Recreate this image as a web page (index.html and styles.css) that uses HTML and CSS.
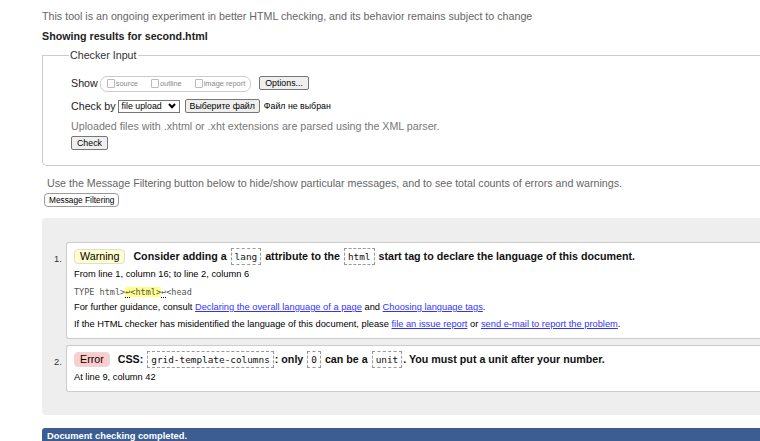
FILE: index.html
```html
<!DOCTYPE html>
<html lang="en">
<head>
<meta charset="utf-8">
<title>Showing results for second.html - Nu Html Checker</title>
<link rel="stylesheet" href="styles.css">
</head>
<body>
<div class="page">
  <p class="notice">This tool is an ongoing experiment in better HTML checking, and its behavior remains subject to change</p>
  <p class="showing">Showing results for second.html</p>

  <fieldset class="checker">
    <legend>Checker Input</legend>
    <div class="row show-row">
      <span class="label">Show</span>
      <span class="opts">
        <span class="opt"><span class="cb"></span>source</span>
        <span class="opt"><span class="cb"></span>outline</span>
        <span class="opt"><span class="cb"></span>image report</span>
      </span>
      <button class="btn options-btn" type="button">Options...</button>
    </div>
    <div class="row check-row">
      <span class="label">Check by</span>
      <span class="select">file upload<svg class="chev" width="8" height="6" viewBox="0 0 8 6"><path d="M1 1 L4 4.2 L7 1" fill="none" stroke="#000" stroke-width="2"/></svg></span>
      <button class="btn file-btn" type="button">Выберите файл</button>
      <span class="nofile">Файл не выбран</span>
    </div>
    <p class="hint">Uploaded files with .xhtml or .xht extensions are parsed using the XML parser.</p>
    <button class="btn check-btn" type="button">Check</button>
  </fieldset>

  <p class="filter-note">Use the Message Filtering button below to hide/show particular messages, and to see total counts of errors and warnings.</p>
  <button class="btn filter-btn" type="button">Message Filtering</button>

  <div class="results">
    <ol class="messages">
      <li class="msg warning">
        <p class="msg-title"><span class="badge">Warning</span><span class="text">Consider adding a <code>lang</code> attribute to the <code>html</code> start tag to declare the language of this document.</span></p>
        <p class="loc">From line 1, column 16; to line 2, column 6</p>
        <p class="extract"><code>TYPE html&gt;<span class="hl"><span class="lf">↩</span>&lt;html&gt;</span><span class="lf">↩</span>&lt;head</code></p>
        <p class="small">For further guidance, consult <a href="#">Declaring the overall language of a page</a> and <a href="#">Choosing language tags</a>.</p>
        <p class="small">If the HTML checker has misidentified the language of this document, please <a href="#">file an issue report</a> or <a href="#">send e-mail to report the problem</a>.</p>
      </li>
      <li class="msg error">
        <p class="msg-title"><span class="badge">Error</span><span class="text">CSS: <code>grid-template-columns</code>: only <code>0</code> can be a <code>unit</code>. You must put a unit after your number.</span></p>
        <p class="loc">At line 9, column 42</p>
      </li>
    </ol>
  </div>

  <p class="done">Document checking completed.</p>
</div>
</body>
</html>
```

FILE: styles.css
```css
html, body {
  margin: 0;
  padding: 0;
  overflow: hidden;
  background: #fff;
}

body {
  font-family: "Liberation Sans", Arial, sans-serif;
  color: #000;
}

.page {
  width: 900px;
  padding-left: 42px;
  padding-top: 9px;
}

p {
  margin: 0;
}

.notice {
  font-size: 10.7px;
  line-height: 14px;
  color: #666;
}

.showing {
  margin-top: 6px;
  font-size: 10.7px;
  line-height: 14px;
  font-weight: bold;
  color: #222;
}

.checker {
  margin: 6px 0 0 0;
  padding: 14px 28px 15px 28px;
  border: 1px solid #ccc;
  border-radius: 0 0 0 5px;
  border-right: none;
}

.checker legend {
  font-size: 10.7px;
  color: #333;
  padding: 0 1px;
  margin-left: -2px;
}

.row {
  display: flex;
  align-items: center;
  font-size: 10.7px;
  color: #222;
}

.label {
  margin-right: 2px;
}

.show-row {
  height: 16px;
}

.opts {
  display: inline-flex;
  align-items: center;
  height: 14px;
  border: 1px solid #ccc;
  border-radius: 7px;
  padding: 0 5px 0 6px;
  margin-right: 8px;
  margin-top: 1px;
}

.opt {
  display: inline-flex;
  align-items: center;
  font-size: 7.4px;
  color: #888;
  margin-right: 13px;
}

.opt:last-child {
  margin-right: 0;
}

.cb {
  display: inline-block;
  width: 6px;
  height: 7px;
  border: 1px solid #bbb;
  border-radius: 1px;
  margin-right: 1px;
}

.btn {
  font-family: "Liberation Sans", Arial, sans-serif;
  font-size: 8.8px;
  color: #000;
  background: #efefef;
  border: 1px solid #767676;
  border-radius: 2px;
  padding: 0 5px;
  height: 14px;
  line-height: 12px;
  margin: 0;
}

.check-row {
  margin-top: 7px;
  height: 16px;
}

.select {
  display: inline-flex;
  align-items: center;
  justify-content: space-between;
  box-sizing: border-box;
  width: 62px;
  font-size: 8.8px;
  height: 13px;
  border: 1px solid #767676;
  padding: 0 3px 0 3px;
  margin-right: 5px;
  background: #fff;
  color: #000;
}

.file-btn {
  padding: 0 4px;
  margin-right: 4px;
}

.nofile {
  font-size: 8.8px;
  color: #000;
}

.hint {
  margin-top: 5px;
  font-size: 10.7px;
  line-height: 14px;
  color: #777;
}

.check-btn {
  margin-top: 3px;
  display: block;
}

.filter-note {
  margin-top: 10px;
  padding-left: 5px;
  font-size: 10.7px;
  line-height: 14px;
  color: #666;
}

.filter-btn {
  display: block;
  margin-top: 3px;
  margin-left: 2px;
  font-size: 8.3px;
  border-color: #999;
  border-radius: 4px;
  background: #fff;
  padding: 0 4px;
}

.results {
  margin-top: 11px;
  background: #eee;
  border-radius: 4px 0 0 4px;
  padding: 24px 0 23px 0;
}

.messages {
  margin: 0;
  padding: 0 0 0 24px;
  list-style: none;
  counter-reset: msg;
}

.msg {
  counter-increment: msg;
  position: relative;
  background: #fff;
  border: 1px solid #ccc;
  border-right: none;
  border-radius: 3px 0 0 3px;
  padding: 5px 8px 7px 7px;
  margin-bottom: 6px;
}

.msg:last-child {
  margin-bottom: 0;
}

.msg::before {
  content: counter(msg) ".";
  position: absolute;
  left: -13px;
  top: 9px;
  font-size: 9.3px;
  line-height: 14px;
  color: #333;
}

.msg-title {
  display: flex;
  align-items: center;
  font-size: 10.7px;
  line-height: 16px;
}

.badge {
  font-size: 10.7px;
  border: 1px solid #ddd;
  border-radius: 4px;
  padding: 0 5px;
  margin-right: 8px;
  line-height: 13px;
}

.warning .badge {
  background: #ffc;
}

.error .badge {
  background: #fcc;
}

.text {
  font-weight: bold;
  color: #111;
}

.text code {
  font-family: "DejaVu Sans Mono", "Liberation Mono", monospace;
  font-weight: normal;
  font-size: 9.4px;
  border: 1px dashed #999;
  padding: 2px 3px;
  margin: 0 1px;
}

.loc {
  margin-top: 3px;
  font-size: 9.3px;
  line-height: 13px;
  color: #000;
}

.extract {
  margin-top: 5px;
  font-size: 8.5px;
  line-height: 13px;
}

.extract code {
  font-family: "DejaVu Sans Mono", "Liberation Mono", monospace;
  color: #555;
}

.hl {
  background: #ff8;
}

.lf {
  border-bottom: 1px dotted #000;
}

.small {
  margin-top: 2px;
  font-size: 9.3px;
  line-height: 13px;
  color: #000;
}

.small + .small {
  margin-top: 4px;
}

.small a {
  color: #33f;
}

.done {
  margin-top: 13px;
  background: #3c5d91;
  color: #fff;
  font-weight: bold;
  font-size: 9.3px;
  line-height: 14px;
  padding: 1px 5px 2px;
  border-radius: 3px 0 0 0;
}
```
